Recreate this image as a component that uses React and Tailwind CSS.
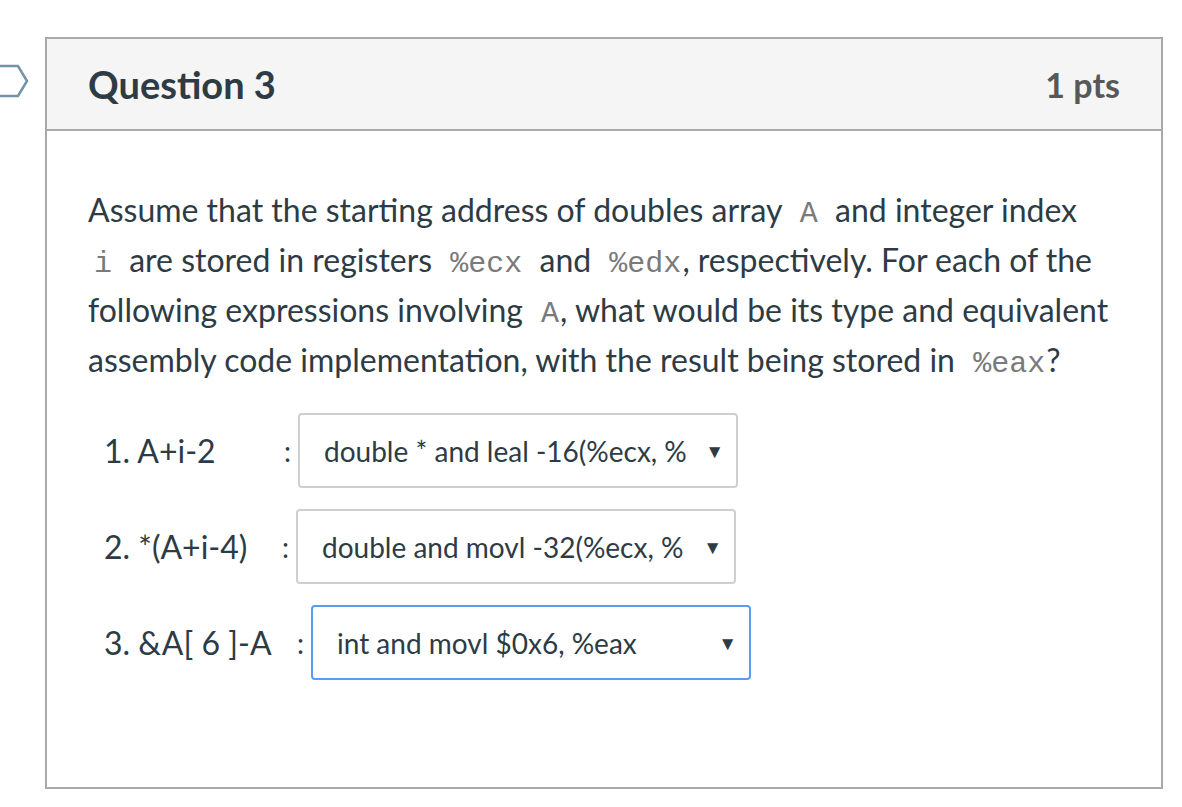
import React from 'react';

// Small inline code token, Canvas-style
const Code = ({ children, tight, first }) => (
  <code
    className={`${first ? 'pl-[6px]' : 'pl-[10px]'} ${tight ? 'pr-[1px]' : 'pr-[9px]'} text-[30px] leading-none text-[#7a7a7a]`}
    style={{ fontFamily: '"Liberation Mono", "Courier New", monospace' }}
  >
    {children}
  </code>
);

const Select = ({ value, focused }) => (
  <div
    className={`flex h-[75px] w-[440px] items-center justify-between rounded-[4px] border-2 bg-white pl-[24px] pr-[12px] ${
      focused ? 'border-[#5b9bf2]' : 'border-[#cfcfcf]'
    }`}
  >
    <span className="overflow-hidden whitespace-nowrap text-[28px] text-[#2d3b45]" style={{ maxWidth: 362 }}>
      {value}
    </span>
    <span className="text-[19px] leading-none text-[#2d3b45]">▼</span>
  </div>
);

const rows = [
  { label: '1. A+i-2', labelW: 'w-[180px]', value: 'double * and leal -16(%ecx, %edx, 8), %eax', focused: false },
  { label: '2. *(A+i-4)', labelW: 'w-[178px]', value: 'double and movl -32(%ecx, %edx, 8), %eax', focused: false },
  { label: '3. &A[ 6 ]-A', labelW: 'w-[193px]', value: 'int and movl $0x6, %eax', focused: true },
];

export default function App() {
  return (
    <div className="relative h-[807px] w-[1182px] bg-white text-[#2d3b45]" style={{ fontFamily: 'Lato, "Open Sans", sans-serif' }}>
      {/* question flag marker, mostly off-screen */}
      <svg className="absolute left-0 top-[64px]" width="32" height="34" viewBox="0 0 32 34">
        <path d="M-10 2 H18 L27 17 L18 32 H-10" fill="none" stroke="#7393a8" strokeWidth="2.5" strokeLinejoin="miter" />
      </svg>

      <div className="ml-[45px] pt-[37px]">
        <div className="flex h-[752px] w-[1118px] flex-col border-2 border-[#a9a9a9]">
          <div className="flex h-[92px] items-center justify-between border-b-2 border-[#a9a9a9] bg-[#f5f5f5] px-[41px]">
            <h2 className="text-[38px] font-bold text-[#2d3b45]">Question 3</h2>
            <div className="text-[34px] font-bold text-[#585858]">1 pts</div>
          </div>

          <div className="px-[41px] pt-[54px]">
            <p className="text-[32px] leading-[50px]">
              Assume that the starting address of doubles array <Code>A</Code> and integer index
              <br />
              <Code first>i</Code> are stored in registers <Code>%ecx</Code> and <Code tight>%edx</Code>, respectively. For each of the
              following expressions involving <Code tight>A</Code>, what would be its type and equivalent assembly code
              implementation, with the result being stored in <Code tight>%eax</Code>?
            </p>

            <div className="mt-[28px] flex flex-col gap-[21px] pl-[16px]">
              {rows.map((r) => (
                <div key={r.label} className="flex items-center">
                  <span className={`${r.labelW} text-[32px]`}>{r.label}</span>
                  <span className="w-[14px] text-[28px]">:</span>
                  <Select value={r.value} focused={r.focused} />
                </div>
              ))}
            </div>
          </div>
        </div>
      </div>
    </div>
  );
}
